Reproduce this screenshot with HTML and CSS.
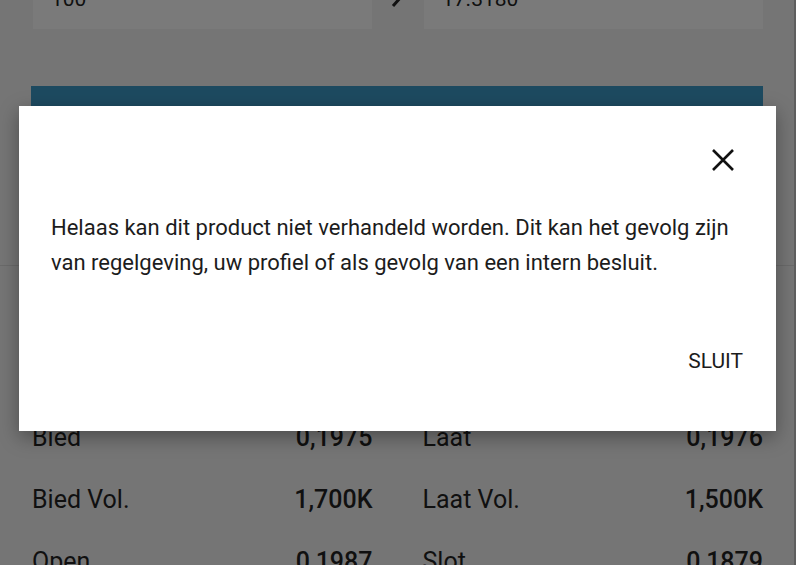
FILE: index.html
```html
<!doctype html>
<html>
<head>
<meta charset="utf-8">
<title>Order</title>
<link rel="stylesheet" href="styles.css">
</head>
<body>
	<div class="screen">
		<div class="form">
			<div class="inputs">
				<div class="veld">100</div>
				<div class="pijl">
					<svg width="14" height="22" viewBox="0 0 14 22"><path d="M3 2 L11 11 L3 20" fill="none" stroke="#111" stroke-width="3"/></svg>
				</div>
				<div class="veld">17.3180</div>
			</div>
			<div class="knop"></div>
		</div>
		<div class="lijn"></div>
		<div class="stats">
			<div class="rij">
				<div class="cel"><span>Bied</span><b>0,1975</b></div>
				<div class="cel"><span>Laat</span><b>0,1976</b></div>
			</div>
			<div class="rij">
				<div class="cel"><span>Bied Vol.</span><b>1,700K</b></div>
				<div class="cel"><span>Laat Vol.</span><b>1,500K</b></div>
			</div>
			<div class="rij">
				<div class="cel"><span>Open</span><b>0,1987</b></div>
				<div class="cel"><span>Slot</span><b>0,1879</b></div>
			</div>
		</div>

		<div class="dialoog">
			<div class="kop">
				<svg class="sluitx" width="24" height="24" viewBox="0 0 24 24"><path d="M2 2 L22 22 M22 2 L2 22" stroke="#111" stroke-width="2.6" fill="none"/></svg>
			</div>
			<p class="tekst">Helaas kan dit product niet verhandeld worden. Dit kan het gevolg zijn van regelgeving, uw profiel of als gevolg van een intern besluit.</p>
			<div class="acties"><span class="sluit">SLUIT</span></div>
		</div>
	</div>
</body>
</html>
```

FILE: styles.css
```css
*{
	margin:0px;
	padding:0px;
	box-sizing:border-box;
}
body{
	background:#fff;
	font-family:Roboto,"Noto Sans",sans-serif;
}
.screen{
	position:relative;
	width:796px;
	height:565px;
	background:#757575;
	border-right:2px solid #5e5e5e;
	overflow:hidden;
	color:#101010;
}
.form{
	padding:0 31px 0 31px;
}
.inputs{
	display:flex;
	align-items:flex-start;
	margin-top:-31px;
	height:60px;
}
.veld{
	flex:1;
	height:60px;
	background:#7a7a7a;
	font-size:21px;
	padding:16px 0 0 18px;
	line-height:28px;
	margin-left:2px;
}
.pijl{
	width:50px;
	display:flex;
	justify-content:center;
	padding-top:17px;
}
.knop{
	margin-top:57px;
	height:60px;
	background:#1d4a60;
}
.lijn{
	margin-top:119px;
	height:1px;
	background:#6a6a6a;
}
.stats{
	padding:0 31px 0 32px;
	margin-top:140px;
}
.rij{
	display:flex;
	height:62px;
	align-items:center;
}
.cel{
	flex:1;
	display:flex;
	justify-content:space-between;
	font-size:25px;
}
.cel:first-child{
	margin-right:50px;
}
.cel b{
	font-weight:500;
}
.dialoog{
	position:absolute;
	left:19px;
	top:106px;
	width:757px;
	height:325px;
	background:#fff;
	box-shadow:0 6px 18px rgba(0,0,0,0.35);
	color:#1c1c1c;
}
.kop{
	display:flex;
	justify-content:flex-end;
	padding:42px 41px 0 0;
	height:104px;
}
.tekst{
	padding:0 32px;
	font-size:22px;
	line-height:35px;
}
.acties{
	display:flex;
	justify-content:flex-end;
	padding:69px 33px 0 0;
}
.sluit{
	font-size:21px;
	font-weight:400;
}
```
